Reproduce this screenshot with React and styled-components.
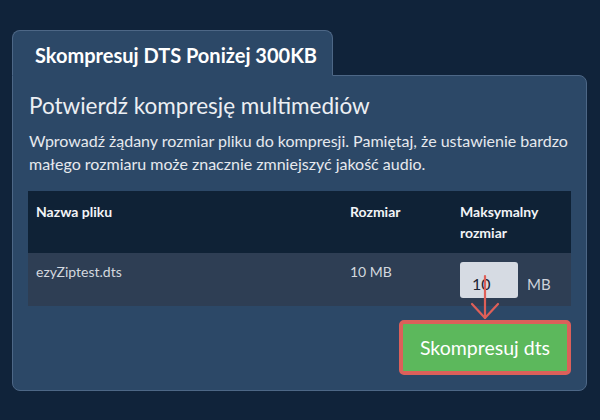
import React from "react";
import styled, { createGlobalStyle } from "styled-components";

const GlobalStyle = createGlobalStyle`
  html, body {
    margin: 0;
    padding: 0;
    background-color: #10233a;
  }
  body {
    font-family: Lato, "Open Sans", sans-serif;
  }
`;

const Page = styled.div`
  padding: 30px 13px 0 12px;
  min-height: 420px;
  box-sizing: border-box;
`;

const Tab = styled.div`
  position: relative;
  z-index: 1;
  width: 321px;
  height: 46px;
  box-sizing: border-box;
  margin-bottom: -1px;
  padding: 14px 0 0 22px;
  background-color: #2c4867;
  border: 1px solid #4d6786;
  border-bottom: 1px solid #2c4867;
  border-radius: 8px 8px 0 0;
  color: #ffffff;
  font-size: 20px;
  font-weight: 700;
  line-height: 20px;
`;

const Panel = styled.div`
  background-color: #2c4867;
  border: 1px solid #4d6786;
  border-radius: 0 8px 8px 8px;
  padding: 16px 15px 15px 15px;
`;

const Heading = styled.h2`
  margin: 0 0 9px 1px;
  color: #eceff3;
  font-size: 22.5px;
  font-weight: 400;
  line-height: 28px;
`;

const Copy = styled.p`
  margin: 0 0 16px 1px;
  color: #e6e9ee;
  font-size: 16px;
  line-height: 23px;
`;

const Table = styled.table`
  width: 100%;
  border-collapse: collapse;
`;

const HeadCell = styled.th`
  width: ${({ $w }) => $w};
  height: 58px;
  box-sizing: border-box;
  padding: 10px 8px;
  background-color: #0f2236;
  color: #f2f4f7;
  font-size: 14px;
  font-weight: 700;
  line-height: 21px;
  text-align: left;
  vertical-align: top;
`;

const Cell = styled.td`
  height: 53px;
  box-sizing: border-box;
  padding: 9px 8px 0;
  background-color: #2e3e54;
  color: #d3d8df;
  font-size: 14px;
  line-height: 20px;
  vertical-align: top;
`;

const SizeField = styled.div`
  position: relative;
  display: flex;
  align-items: baseline;
  gap: 9px;
  height: 36px;
`;

const SizeInput = styled.input`
  width: 58px;
  height: 36px;
  box-sizing: border-box;
  padding: 7px 0 0 12px;
  border: none;
  border-radius: 3px;
  background-color: #d6dbe3;
  color: #1c2533;
  font-family: Lato, sans-serif;
  font-size: 16px;
  outline: none;
`;

const Unit = styled.span`
  color: #cdd2da;
  font-size: 15px;
`;

const Arrow = styled.svg`
  position: absolute;
  left: 11px;
  top: 14px;
  overflow: visible;
`;

const Actions = styled.div`
  display: flex;
  justify-content: flex-end;
  margin-top: 14px;
`;

const Button = styled.button`
  width: 172px;
  height: 55px;
  box-sizing: border-box;
  border: 4px solid #dc605a;
  border-radius: 5px;
  background-color: #5cb85c;
  color: #ffffff;
  font-family: Lato, sans-serif;
  font-size: 19.5px;
  font-weight: 400;
  cursor: pointer;
`;

export default function App() {
  return (
    <Page>
      <GlobalStyle />
      <Tab>Skompresuj DTS Poniżej 300KB</Tab>
      <Panel>
        <Heading>Potwierdź kompresję multimediów</Heading>
        <Copy>
          Wprowadź żądany rozmiar pliku do kompresji. Pamiętaj, że ustawienie
          bardzo małego rozmiaru może znacznie zmniejszyć jakość audio.
        </Copy>
        <Table>
          <thead>
            <tr>
              <HeadCell $w="314px">Nazwa pliku</HeadCell>
              <HeadCell $w="110px">Rozmiar</HeadCell>
              <HeadCell>
                Maksymalny
                <br />
                rozmiar
              </HeadCell>
            </tr>
          </thead>
          <tbody>
            <tr>
              <Cell>ezyZiptest.dts</Cell>
              <Cell>10 MB</Cell>
              <Cell>
                <SizeField>
                  <SizeInput defaultValue="10" />
                  <Unit>MB</Unit>
                  <Arrow width="28" height="44" viewBox="0 0 28 44">
                    <g
                      fill="none"
                      stroke="#de5f58"
                      strokeWidth="2.2"
                      strokeLinecap="round"
                      strokeLinejoin="round"
                    >
                      <path d="M14 0 V42" />
                      <path d="M1 28 L14 42 L27 28" />
                    </g>
                  </Arrow>
                </SizeField>
              </Cell>
            </tr>
          </tbody>
        </Table>
        <Actions>
          <Button>Skompresuj dts</Button>
        </Actions>
      </Panel>
    </Page>
  );
}
